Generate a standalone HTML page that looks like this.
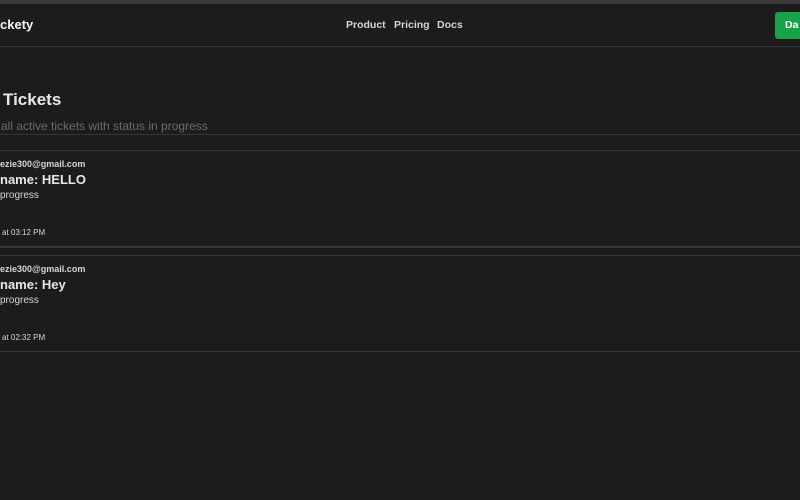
<!DOCTYPE html>
<html><head><meta charset="utf-8"><style>
*{margin:0;padding:0;box-sizing:border-box}
body{width:800px;height:500px;background:#1c1c1c;overflow:hidden;position:relative;font-family:"Liberation Sans",sans-serif;color:#e5e7eb}
.t{position:absolute;white-space:nowrap;line-height:1}
.ln{position:absolute;left:0;width:800px;height:1px;background:#34363d}
</style></head><body>
<div style="position:absolute;left:0;top:0;width:800px;height:4px;background:#3a3a3a"></div>
<div class="t" style="left:0;top:18px;font-size:13px;font-weight:bold;color:#f3f4f6">ckety</div>
<div class="t" style="left:346px;top:20px;font-size:10.5px;font-weight:bold;color:#d1d5db">Product</div>
<div class="t" style="left:394px;top:20px;font-size:10.5px;font-weight:bold;color:#d1d5db">Pricing</div>
<div class="t" style="left:437px;top:20px;font-size:10.5px;font-weight:bold;color:#d1d5db">Docs</div>
<div style="position:absolute;left:775px;top:12px;width:40px;height:27px;background:#16a34a;border-radius:3px"></div>
<div class="t" style="left:785px;top:20px;font-size:10.5px;font-weight:bold;color:#fff">Da</div>
<div class="ln" style="top:46px"></div>
<div class="t" style="left:3px;top:91px;font-size:17px;font-weight:bold;color:#e5e7eb">Tickets</div>
<div class="t" style="left:1px;top:120px;font-size:12px;color:#6b6b6b">all active tickets with status in progress</div>
<div class="ln" style="top:134px"></div>
<div class="ln" style="top:150px"></div>
<div class="t" style="left:0;top:160px;font-size:9px;font-weight:bold;color:#d1d5db">ezie300@gmail.com</div>
<div class="t" style="left:0;top:173px;font-size:13px;font-weight:bold;color:#e5e7eb">name: HELLO</div>
<div class="t" style="left:0;top:191px;font-size:10px;color:#d1d5db">progress</div>
<div class="t" style="left:2px;top:229px;font-size:8px;color:#d1d5db">at 03:12 PM</div>
<div class="ln" style="top:246px;height:2px"></div>
<div class="ln" style="top:255px"></div>
<div class="t" style="left:0;top:265px;font-size:9px;font-weight:bold;color:#d1d5db">ezie300@gmail.com</div>
<div class="t" style="left:0;top:278px;font-size:13px;font-weight:bold;color:#e5e7eb">name: Hey</div>
<div class="t" style="left:0;top:296px;font-size:10px;color:#d1d5db">progress</div>
<div class="t" style="left:2px;top:334px;font-size:8px;color:#d1d5db">at 02:32 PM</div>
<div class="ln" style="top:351px"></div>
</body></html>
